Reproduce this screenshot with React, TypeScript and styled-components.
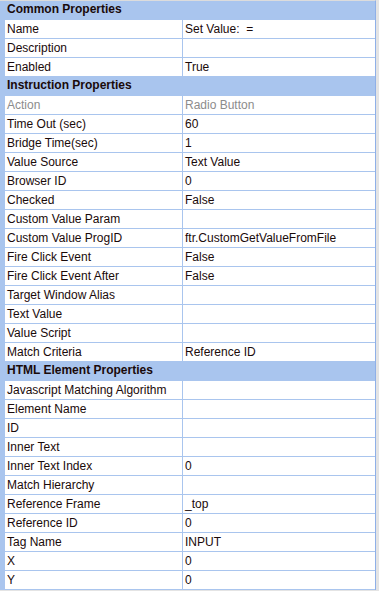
import React from "react"
import styled, { createGlobalStyle } from "styled-components"

type Prop = {
    name: string
    value?: string
    disabled?: boolean
}

type Section = {
    title: string
    props: Prop[]
}

const sections: Section[] = [
    {
        title: 'Common Properties',
        props: [
            { name: 'Name', value: 'Set Value:\u00a0 =' },
            { name: 'Description' },
            { name: 'Enabled', value: 'True' },
        ],
    },
    {
        title: 'Instruction Properties',
        props: [
            { name: 'Action', value: 'Radio Button', disabled: true },
            { name: 'Time Out (sec)', value: '60' },
            { name: 'Bridge Time(sec)', value: '1' },
            { name: 'Value Source', value: 'Text Value' },
            { name: 'Browser ID', value: '0' },
            { name: 'Checked', value: 'False' },
            { name: 'Custom Value Param' },
            { name: 'Custom Value ProgID', value: 'ftr.CustomGetValueFromFile' },
            { name: 'Fire Click Event', value: 'False' },
            { name: 'Fire Click Event After', value: 'False' },
            { name: 'Target Window Alias' },
            { name: 'Text Value' },
            { name: 'Value Script' },
            { name: 'Match Criteria', value: 'Reference ID' },
        ],
    },
    {
        title: 'HTML Element Properties',
        props: [
            { name: 'Javascript Matching Algorithm' },
            { name: 'Element Name' },
            { name: 'ID' },
            { name: 'Inner Text' },
            { name: 'Inner Text Index', value: '0' },
            { name: 'Match Hierarchy' },
            { name: 'Reference Frame', value: '_top' },
            { name: 'Reference ID', value: '0' },
            { name: 'Tag Name', value: 'INPUT' },
            { name: 'X', value: '0' },
            { name: 'Y', value: '0' },
        ],
    },
]

const lineBlue = '#a9c5ee'

const GlobalStyle = createGlobalStyle`
    html, body {
        margin: 0;
        padding: 0;
        background: #ffffff;
    }
`

const Frame = styled.div`
    width: 379px;
    height: 591px;
    box-sizing: border-box;
    padding: 0 3px 2px 0;
    background: #e4e4e4;
    font-family: "Liberation Sans", Arial, sans-serif;
    font-size: 12px;
    color: #1a0a0a;
    overflow: hidden;
`

const Grid = styled.div`
    background: #ffffff;
    border-top: 1px solid #dcdcdc;
    border-right: 1px solid #8fb0e8;
`

const Header = styled.div`
    height: 18px;
    line-height: 17px;
    padding-left: 7px;
    background: ${lineBlue};
    border-bottom: 1px solid ${lineBlue};
    font-weight: bold;
    white-space: nowrap;
`

const Row = styled.div`
    display: grid;
    grid-template-columns: 5px 178px 1fr;
    height: 19px;
    box-sizing: border-box;
    border-bottom: 1px solid ${lineBlue};
`

const Margin = styled.div`
    background: ${lineBlue};
`

const Cell = styled.div<{ $dim?: boolean }>`
    line-height: 18px;
    padding-left: 2px;
    white-space: nowrap;
    overflow: hidden;
    color: ${p => p.$dim ? '#8c8c8c' : 'inherit'};
`

const NameCell = styled(Cell)`
    border-right: 1px solid ${lineBlue};
`

const App: React.FC = (): JSX.Element => {
    return (
        <Frame>
            <GlobalStyle />
            <Grid>
                {sections.map(sec => (
                    <div key={sec.title}>
                        <Header>{sec.title}</Header>
                        {sec.props.map(p => (
                            <Row key={p.name}>
                                <Margin />
                                <NameCell $dim={p.disabled}>{p.name}</NameCell>
                                <Cell $dim={p.disabled}>{p.value || ''}</Cell>
                            </Row>
                        ))}
                    </div>
                ))}
            </Grid>
        </Frame>
    )
}

export default App
